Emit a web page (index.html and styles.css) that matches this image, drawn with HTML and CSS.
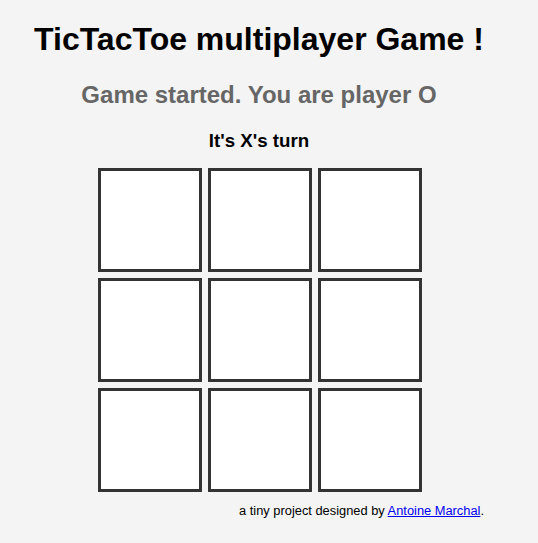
FILE: index.html
```html
<!DOCTYPE html>
<html>
<head>
<meta charset="utf-8">
<title>TicTacToe</title>
<link rel="stylesheet" href="styles.css">
</head>
<body>
<div class="page">
  <h1 class="title">TicTacToe multiplayer Game !</h1>
  <h2 class="status">Game started. You are player O</h2>
  <h3 class="turn">It's X's turn</h3>
  <div class="board">
    <div class="cell"></div><div class="cell"></div><div class="cell"></div>
    <div class="cell"></div><div class="cell"></div><div class="cell"></div>
    <div class="cell"></div><div class="cell"></div><div class="cell"></div>
  </div>
  <p class="footer">a tiny project designed by <a href="#">Antoine Marchal</a>.</p>
</div>
</body>
</html>
```
FILE: styles.css
```css
html, body {
  margin: 0;
  padding: 0;
  background: #f4f4f4;
}
body {
  font-family: "Liberation Sans", Arial, sans-serif;
  color: #000;
}
.page {
  width: 502px;
  margin-left: 8px;
  padding-top: 1px;
  display: flex;
  flex-direction: column;
  align-items: center;
}
.title {
  font-size: 32px;
  font-weight: bold;
  margin: 20px 0 0;
  line-height: 37px;
}
.status {
  font-size: 24px;
  font-weight: bold;
  color: #666;
  margin: 23px 0 0;
  line-height: 28px;
}
.turn {
  font-size: 18.72px;
  font-weight: bold;
  margin: 21px 0 0;
  line-height: 22px;
}
.board {
  margin: 16px 0 0 2px;
  display: grid;
  grid-template-columns: repeat(3, 104px);
  grid-auto-rows: 104px;
  gap: 6px;
}
.cell {
  box-sizing: border-box;
  border: 3px solid #333;
  background: #fff;
}
.footer {
  align-self: flex-end;
  margin: 11px 26px 0 0;
  font-size: 12.85px;
  line-height: 15px;
}
.footer a {
  color: #00e;
  text-decoration: underline;
}
```
